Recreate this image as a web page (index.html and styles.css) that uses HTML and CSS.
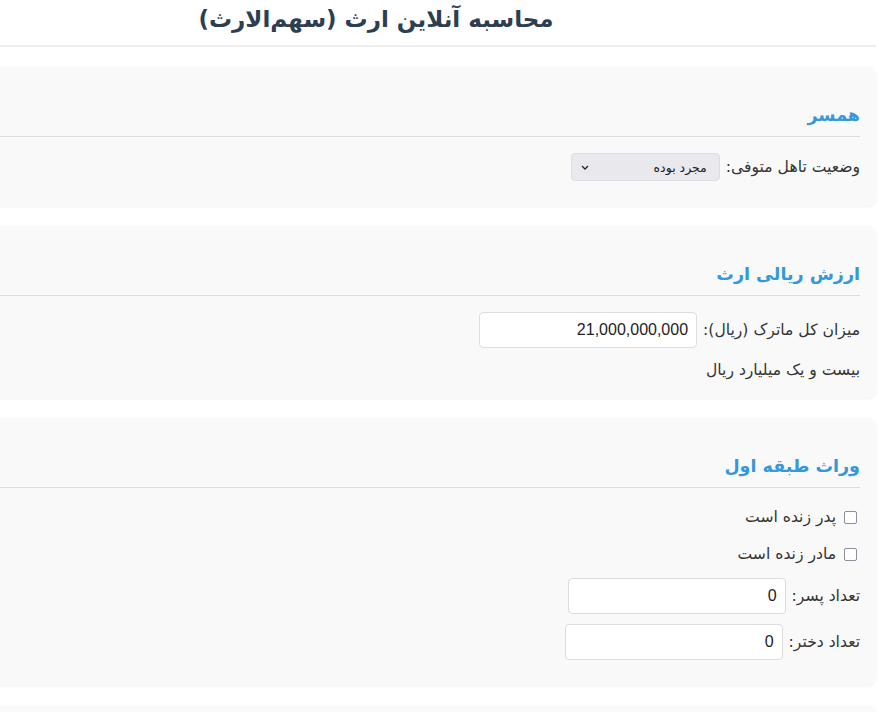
FILE: index.html
```html
<!DOCTYPE html>
<html dir="rtl" lang="fa">
<head>
<meta charset="utf-8">
<title>محاسبه آنلاین ارث</title>
<link rel="stylesheet" href="styles.css">
</head>
<body>
<div class="page">
  <header class="top">
    <h1 class="title">محاسبه آنلاین ارث (سهم‌الارث)</h1>
  </header>

  <section class="card">
    <h2 class="card-title">همسر</h2>
    <div class="row">
      <label class="label" for="marital">وضعیت تاهل متوفی:</label>
      <select class="select" id="marital">
        <option>مجرد بوده</option>
        <option>متاهل بوده</option>
      </select>
    </div>
  </section>

  <section class="card">
    <h2 class="card-title">ارزش ریالی ارث</h2>
    <div class="row">
      <label class="label" for="estate">میزان کل ماترک (ریال):</label>
      <input class="field" id="estate" type="text" value="21,000,000,000">
    </div>
    <div class="words">بیست و یک میلیارد ریال</div>
  </section>

  <section class="card">
    <h2 class="card-title">وراث طبقه اول</h2>
    <div class="row check-row">
      <input class="check" type="checkbox" id="father">
      <label class="label" for="father">پدر زنده است</label>
    </div>
    <div class="row check-row">
      <input class="check" type="checkbox" id="mother">
      <label class="label" for="mother">مادر زنده است</label>
    </div>
    <div class="row">
      <label class="label" for="sons">تعداد پسر:</label>
      <input class="field" id="sons" type="text" value="0">
    </div>
    <div class="row">
      <label class="label" for="daughters">تعداد دختر:</label>
      <input class="field" id="daughters" type="text" value="0">
    </div>
  </section>

  <section class="card card-empty"></section>
</div>
</body>
</html>
```

FILE: styles.css
```css
html {
  overflow-x: hidden;
}

body {
  margin: 0;
  background: #ffffff;
  color: #333333;
  font-family: "DejaVu Sans", "Noto Sans", sans-serif;
  font-size: 16px;
}

.page {
  width: 1000px;
  margin-right: 3px;
}

.top {
  border-bottom: 2px solid #eeeeee;
  padding: 2px 0 9px;
  margin-bottom: 20px;
}

.title {
  margin: 0;
  text-align: center;
  font-size: 23px;
  line-height: 34px;
  font-weight: bold;
  color: #2c3e50;
}

.card {
  background: #f9f9f9;
  border-radius: 8px;
  padding: 20px 16px 15px;
  margin-bottom: 20px;
  box-shadow: 0 1px 3px rgba(0, 0, 0, 0.06);
}

.card-empty {
  height: 60px;
}

.card-title {
  margin: 17px 0 16px;
  padding-bottom: 10px;
  border-bottom: 1px solid #dddddd;
  font-size: 17.5px;
  line-height: 22px;
  font-weight: bold;
  color: #3498db;
}

.row {
  display: flex;
  align-items: center;
  gap: 6px;
  margin-bottom: 10px;
}

.check-row {
  min-height: 27px;
  gap: 8px;
}

.label {
  font-size: 15.6px;
  line-height: 25px;
}

.select {
  appearance: none;
  -webkit-appearance: none;
  width: 149px;
  height: 28px;
  padding: 0 12px 0 24px;
  border: 1px solid #dcdce2;
  border-radius: 4px;
  background-color: #e9e9ed;
  background-image: url("data:image/svg+xml;utf8,<svg xmlns='http://www.w3.org/2000/svg' width='8' height='5' viewBox='0 0 8 5'><path d='M1 1l3 3 3-3' fill='none' stroke='%23222' stroke-width='1.3'/></svg>");
  background-repeat: no-repeat;
  background-position: left 9px center;
  font-family: "DejaVu Sans", sans-serif;
  font-size: 12.5px;
  color: #222222;
  direction: rtl;
}

.field {
  width: 200px;
  padding: 8px;
  border: 1px solid #dddddd;
  border-radius: 4px;
  background: #ffffff;
  font-family: "Liberation Sans", Arial, sans-serif;
  font-size: 16px;
  line-height: 18px;
  color: #222222;
  direction: rtl;
  text-align: right;
}

.check {
  appearance: none;
  -webkit-appearance: none;
  width: 13px;
  height: 13px;
  margin: 0 3px 0 0;
  border: 1px solid #8f8f9d;
  border-radius: 2px;
  background: #ffffff;
}

.words {
  font-size: 15.6px;
  line-height: 25px;
}
```
